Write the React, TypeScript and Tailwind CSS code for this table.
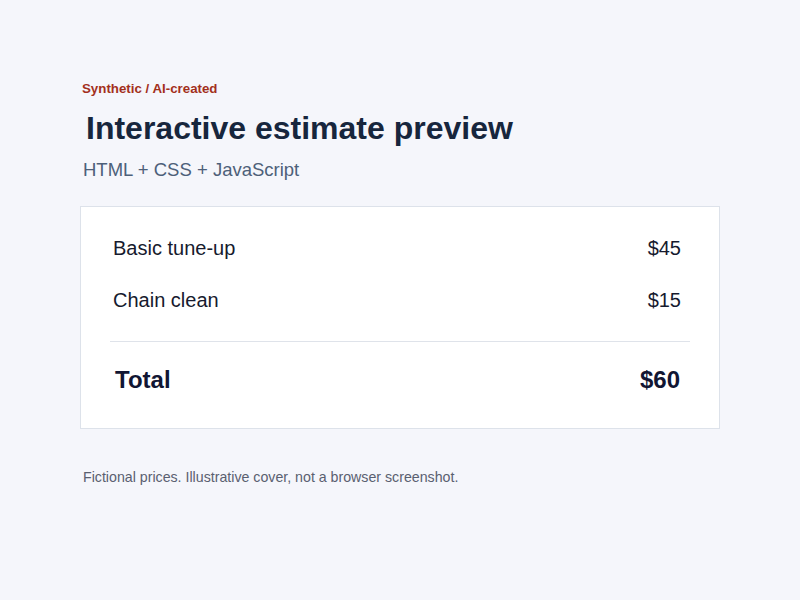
import React from 'react'

const items = [
  { label: 'Basic tune-up', price: '$45' },
  { label: 'Chain clean', price: '$15' },
]

export default function App() {
  return (
    <div className="min-h-[600px] w-full bg-[#f5f6fb] font-['Liberation_Sans',Arial,sans-serif]">
      <div className="mx-auto w-[640px] pt-[80px]">
        <div className="pl-[2px] text-[13.3px] font-bold leading-[18px] text-[#a3301c]">
          Synthetic / AI-created
        </div>
        <h1 className="mt-[12px] pl-[6px] text-[32px] font-bold leading-[36px] text-[#17263d]">
          Interactive estimate preview
        </h1>
        <div className="mt-[12px] pl-[3px] text-[18.5px] leading-[24px] text-[#4d6079]">
          HTML + CSS + JavaScript
        </div>

        <div className="mt-[24px] border border-[#dde2ea] bg-white px-[29px] pt-[15px] pb-[10px]">
          {items.map((item) => (
            <div
              key={item.label}
              className="flex h-[52px] items-center justify-between pl-[3px] pr-[9px] text-[20px] text-[#161a2e]"
            >
              <span>{item.label}</span>
              <span>{item.price}</span>
            </div>
          ))}
          <div className="mt-[15px] border-t border-[#dfe3ea]" />
          <div className="flex h-[76px] items-center justify-between pl-[5px] pr-[10px] text-[24px] font-bold text-[#111633]">
            <span>Total</span>
            <span>$60</span>
          </div>
        </div>

        <p className="mt-[39px] pl-[3px] text-[14.2px] leading-[18px] text-[#5a6070]">
          Fictional prices. Illustrative cover, not a browser screenshot.
        </p>
      </div>
    </div>
  )
}
